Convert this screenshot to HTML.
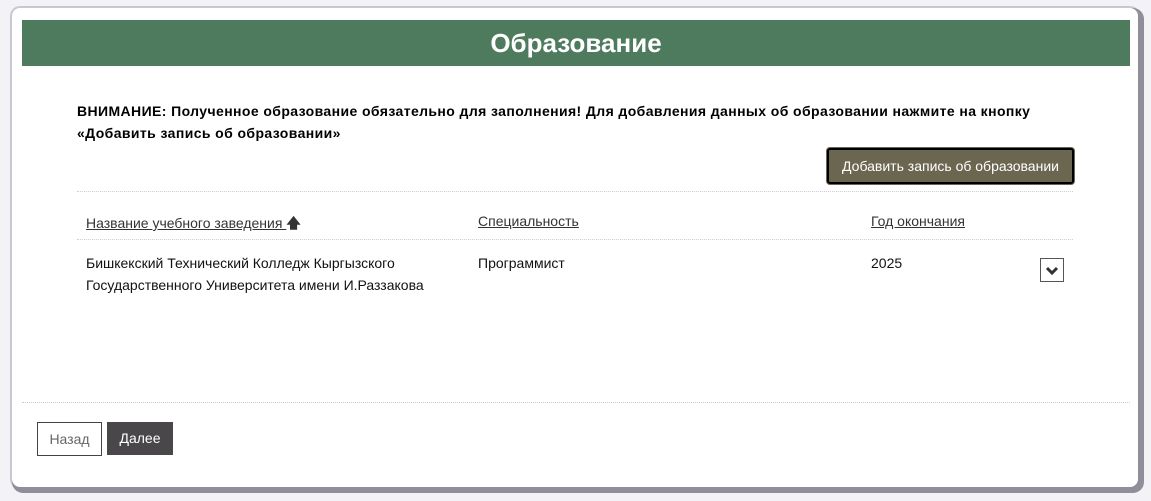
<!DOCTYPE html>
<html><head><meta charset="utf-8"><style>
body{margin:0;width:1151px;height:501px;background:#f3f3f7;font-family:"Liberation Sans","DejaVu Sans",sans-serif;position:relative;overflow:hidden}
.card{position:absolute;left:12px;top:8px;width:1126px;height:479px;background:#fff;border-radius:8px;box-shadow:3px 3px 0 3px #8f8f9a,0 0 0 2px #c8c8d2}
.hdr{position:absolute;left:10px;top:12px;width:1108px;height:46px;background:#4e7b5d;color:#fff;font-size:26px;font-weight:bold;text-align:center;line-height:46px}
.warn{position:absolute;left:65px;top:92px;width:990px;font-size:14px;font-weight:bold;line-height:22px;color:#000;letter-spacing:0.4px}
.add{position:absolute;left:815px;top:140px;width:243px;height:32px;background:#6b6650;border:2px solid #000;border-radius:3px;box-shadow:0 0 0 1px #6b6650;color:#fff;font-size:14px;line-height:32px;text-align:center}
.dot{position:absolute;left:65px;width:996px;border-top:1px dotted #ccd}
.th{position:absolute;top:205px;font-size:14px;color:#333;text-decoration:underline}
.td{position:absolute;top:244px;font-size:14px;color:#111;line-height:22px}
.dd{position:absolute;left:1028px;top:250px;width:22px;height:22px;border:1px solid #555;text-align:center}
.btn{position:absolute;top:414px;height:33px;font-size:14px;line-height:33px;text-align:center}
</style></head><body>
<div class="card">
<div class="hdr">Образование</div>
<div class="warn">ВНИМАНИЕ: Полученное образование обязательно для заполнения! Для добавления данных об образовании нажмите на кнопку<br>«Добавить запись об образовании»</div>
<div class="add">Добавить запись об образовании</div>
<div class="dot" style="top:183px"></div>
<div class="th" style="left:74px">Название учебного заведения <b style="text-decoration:none;display:inline-block">🡅</b></div>
<div class="th" style="left:466px">Специальность</div>
<div class="th" style="left:859px">Год окончания</div>
<div class="dot" style="top:231px"></div>
<div class="td" style="left:74px">Бишкекский Технический Колледж Кыргызского<br>Государственного Университета имени И.Раззакова</div>
<div class="td" style="left:466px">Программист</div>
<div class="td" style="left:859px">2025</div>
<div class="dd"><svg width="14" height="22" viewBox="0 0 14 22"><path d="M2 9l5 5 5-5" fill="none" stroke="#333" stroke-width="3"/></svg></div>
<div class="dot" style="top:394px;left:10px;width:1108px"></div>
<div class="btn" style="left:25px;width:63px;border:1px solid #444;color:#666;height:32px;line-height:32px">Назад</div>
<div class="btn" style="left:95px;width:66px;background:#4a474b;color:#fff">Далее</div>
</div>
</body></html>
